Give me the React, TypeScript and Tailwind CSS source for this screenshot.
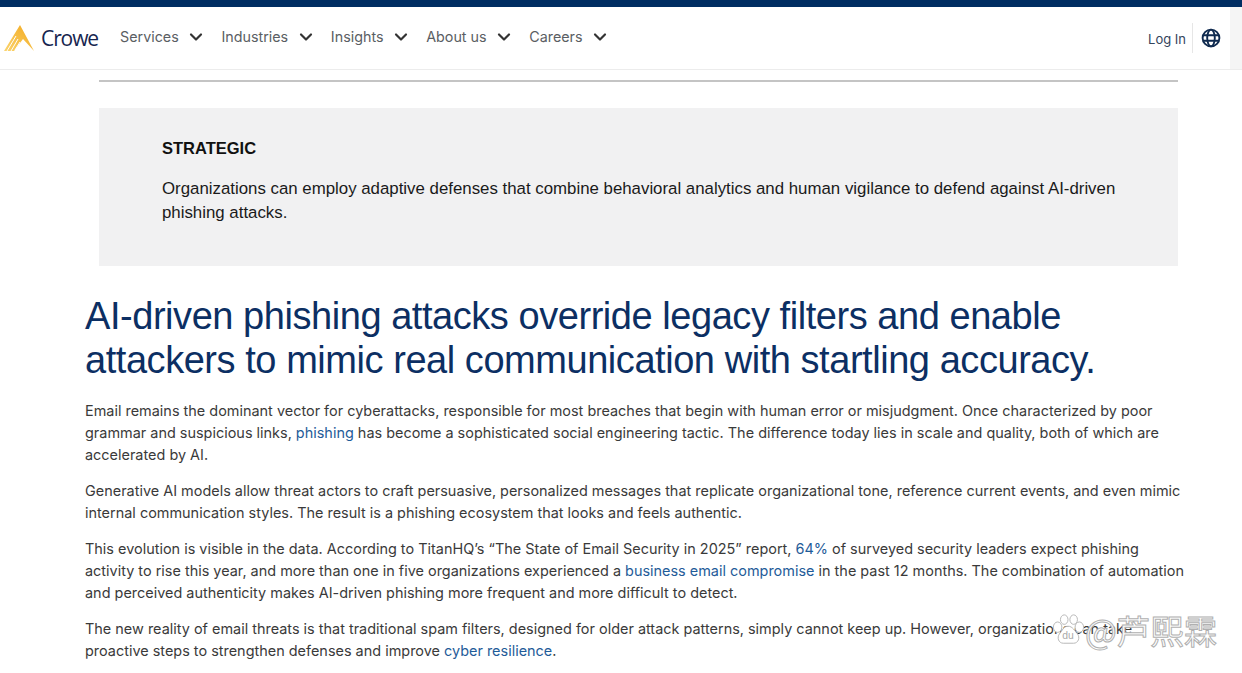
import { ChevronDown } from "lucide-react";

const navItems = ["Services", "Industries", "Insights", "About us", "Careers"];
const linkClass = "text-[#1f5c99]";

function Logo() {
  return (
    <div className="flex items-center">
      <svg width="32" height="28" viewBox="0 0 32 28" className="ml-[3px]">
        <defs>
          <linearGradient id="peak" x1="0" y1="1" x2="1" y2="0">
            <stop offset="0" stopColor="#fbd56f" />
            <stop offset="1" stopColor="#f2a71b" />
          </linearGradient>
        </defs>
        <path d="M17 1 L31 27 L20 15 L11 27 L1 27 Z" fill="url(#peak)" />
        <path d="M4 27 L13 12 M8 27 L15 15 M12 26 L17 18" stroke="#fff" strokeWidth="1" />
      </svg>
      <span className="ml-[6px] text-[21px] leading-none tracking-[-1.1px] text-[#16254f] font-['Open_Sans',sans-serif]">
        Crowe
      </span>
    </div>
  );
}

function Header() {
  return (
    <header className="flex h-[63px] items-center border-b border-[#ececec] bg-white">
      <Logo />
      <nav className="ml-[22px] flex -translate-y-px items-center gap-[15px]">
        {navItems.map((item) => (
          <div key={item} className="flex items-center gap-[7.75px] text-[14.3px] text-[#5a5e63]">
            <span>{item}</span>
            <ChevronDown size={20} strokeWidth={2.6} className="text-[#333]" />
          </div>
        ))}
      </nav>
      <div className="ml-auto flex h-full items-center">
        <span className="pt-[3px] text-[13px] text-[#33445c]">Log In</span>
        <div className="ml-[6px] h-[30px] w-px bg-[#e6e6e6]" />
        <svg width="20" height="20" viewBox="0 0 20 20" fill="none" stroke="#0f2a4f" strokeWidth="1.9" className="ml-[8px]">
          <circle cx="10" cy="10" r="8.4" />
          <ellipse cx="10" cy="10" rx="3.8" ry="8.4" />
          <path d="M2.4 7.2h15.2M2.4 12.8h15.2" />
        </svg>
        <div className="ml-[9px] h-full w-[12px] bg-[#f5f5f5]" />
      </div>
    </header>
  );
}

function Callout() {
  return (
    <section className="ml-[99px] mr-[64px] mt-[26px] h-[158px] bg-[#f1f1f2] pl-[63px] pr-[50px] pt-[30px] font-['Liberation_Sans',sans-serif]">
      <h3 className="text-[16.5px] font-bold leading-5 text-[#111]">STRATEGIC</h3>
      <p className="mt-[19px] text-[16.84px] leading-[24px] text-[#1a1a1a]">
        Organizations can employ adaptive defenses that combine behavioral analytics and human vigilance to defend against AI-driven phishing attacks.
      </p>
    </section>
  );
}

function Article() {
  return (
    <article className="ml-[85px] mr-[50px] mt-[28px]">
      <h1 className="font-['Liberation_Sans',sans-serif] text-[38px] leading-[44px] tracking-[-0.45px] text-[#0c2f63]">
        AI-driven phishing attacks override legacy filters and enable attackers to mimic real communication with startling accuracy.
      </h1>
      <div className="mt-[18px] flex flex-col gap-[14px] text-[14.44px] leading-[22px] text-[#3a3a3a]">
        <p>
          Email remains the dominant vector for cyberattacks, responsible for most breaches that begin with human error or misjudgment. Once characterized by poor grammar and suspicious links, <span className={linkClass}>phishing</span> has become a sophisticated social engineering tactic. The difference today lies in scale and quality, both of which are accelerated by AI.
        </p>
        <p>
          Generative AI models allow threat actors to craft persuasive, personalized messages that replicate organizational tone, reference current events, and even mimic internal communication styles. The result is a phishing ecosystem that looks and feels authentic.
        </p>
        <p>
          This evolution is visible in the data. According to TitanHQ’s “The State of Email Security in 2025” report, <span className={linkClass}>64%</span> of surveyed security leaders expect phishing activity to rise this year, and more than one in five organizations experienced a <span className={linkClass}>business email compromise</span> in the past 12 months. The combination of automation and perceived authenticity makes AI-driven phishing more frequent and more difficult to detect.
        </p>
        <p>
          The new reality of email threats is that traditional spam filters, designed for older attack patterns, simply cannot keep up. However, organizations can take proactive steps to strengthen defenses and improve <span className={linkClass}>cyber resilience</span>.
        </p>
      </div>
    </article>
  );
}

function Watermark() {
  return (
    <div className="absolute left-[1051px] top-[612px] flex items-center">
      <svg width="34" height="36" viewBox="0 0 36 36" fill="#fff" stroke="#b5b5b5" strokeWidth="1">
        <ellipse cx="7" cy="15" rx="4.5" ry="5.5" />
        <ellipse cx="14" cy="7" rx="4" ry="5" />
        <ellipse cx="24" cy="7" rx="4" ry="5" />
        <ellipse cx="30" cy="15" rx="4.5" ry="5.5" />
        <path d="M18 14c5 0 7 5 10 8 3 4 1 10-4 10H13c-5 0-7-6-4-10 3-3 4-8 9-8z" />
        <text x="18" y="28" textAnchor="middle" fontSize="11" fill="#aaa" stroke="none" fontFamily="Liberation Sans, sans-serif">du</text>
      </svg>
      <span className="text-[33.5px] leading-none text-white [-webkit-text-stroke:1px_#b0b0b0] font-['Noto_Sans_CJK_SC',sans-serif]">
        @芦熙霖
      </span>
    </div>
  );
}

export default function App() {
  return (
    <div className="relative h-[673px] w-[1242px] overflow-hidden bg-white font-['Inter',sans-serif]">
      <div className="h-[7px] bg-[#002d62]" />
      <Header />
      <div className="ml-[99px] mr-[64px] mt-[10px] h-[2px] bg-[#c4c4c4]" />
      <Callout />
      <Article />
      <Watermark />
    </div>
  );
}
